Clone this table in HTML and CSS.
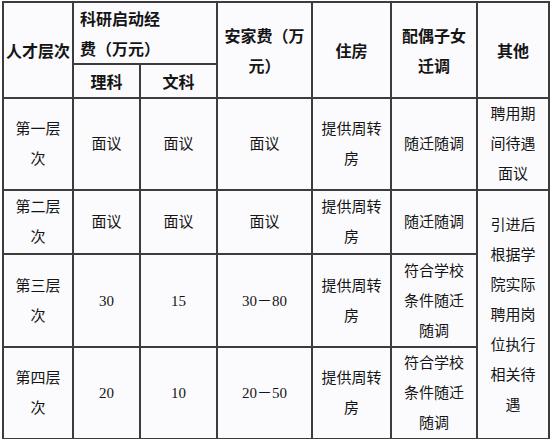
FILE: index.html
```html
<!DOCTYPE html>
<html lang="zh">
<head>
<meta charset="utf-8">
<link rel="stylesheet" href="styles.css">
</head>
<body>
<table class="grid">
  <colgroup>
    <col class="c1"><col class="c2"><col class="c3"><col class="c4"><col class="c5"><col class="c6"><col class="c7">
  </colgroup>
  <tr class="h1">
    <th rowspan="2">人才层次</th>
    <th colspan="2" class="left">科研启动经<br>费（万元）</th>
    <th rowspan="2">安家费（万<br>元）</th>
    <th rowspan="2">住房</th>
    <th rowspan="2">配偶子女<br>迁调</th>
    <th rowspan="2">其他</th>
  </tr>
  <tr class="h2">
    <th>理科</th>
    <th>文科</th>
  </tr>
  <tr class="r1">
    <td>第一层<br>次</td>
    <td>面议</td>
    <td>面议</td>
    <td>面议</td>
    <td>提供周转<br>房</td>
    <td>随迁随调</td>
    <td>聘用期<br>间待遇<br>面议</td>
  </tr>
  <tr class="r2">
    <td>第二层<br>次</td>
    <td>面议</td>
    <td>面议</td>
    <td>面议</td>
    <td>提供周转<br>房</td>
    <td>随迁随调</td>
    <td rowspan="3">引进后<br>根据学<br>院实际<br>聘用岗<br>位执行<br>相关待<br>遇</td>
  </tr>
  <tr class="r3">
    <td>第三层<br>次</td>
    <td>30</td>
    <td>15</td>
    <td>30－80</td>
    <td>提供周转<br>房</td>
    <td>符合学校<br>条件随迁<br>随调</td>
  </tr>
  <tr class="r4">
    <td>第四层<br>次</td>
    <td>20</td>
    <td>10</td>
    <td>20－50</td>
    <td>提供周转<br>房</td>
    <td>符合学校<br>条件随迁<br>随调</td>
  </tr>
</table>
</body>
</html>
```

FILE: styles.css
```css
html, body {
  margin: 0;
  padding: 0;
  background: #ffffff;
}

.grid {
  margin: 1px 0 0 2px;
  width: 548px;
  table-layout: fixed;
  border-collapse: separate;
  border-spacing: 0;
  border: 1px solid #3c3c3c;
  font-family: "Liberation Serif", "Noto Sans CJK SC", sans-serif;
  color: #151515;
}

.c1 { width: 70px; }
.c2 { width: 67px; }
.c3 { width: 77px; }
.c4 { width: 95px; }
.c5 { width: 79px; }
.c6 { width: 86px; }
.c7 { width: 72px; }

.grid th,
.grid td {
  border: 1px solid #3c3c3c;
  background: #fbfbfd;
  padding: 0;
  text-align: center;
  vertical-align: middle;
  white-space: nowrap;
  line-height: 30px;
}

.grid th {
  font-family: "Noto Sans CJK SC", sans-serif;
  font-size: 16px;
  font-weight: 700;
}

.grid td {
  font-size: 15px;
}

.grid th.left {
  text-align: left;
  padding-left: 6px;
}

.h1 { height: 61px; }
.h2 { height: 34px; }
.r1 { height: 91px; }
.r2 { height: 64px; }
.r3 { height: 93px; }
.r4 { height: 92px; }
```
